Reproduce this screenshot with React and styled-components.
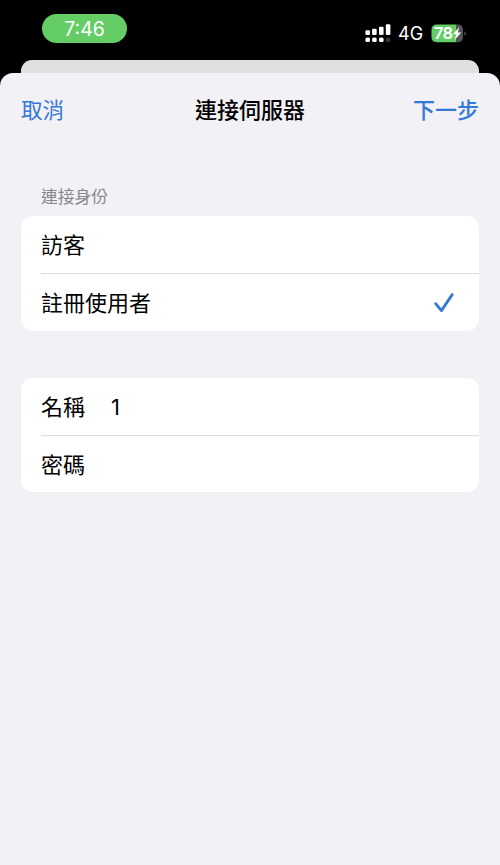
import React from "react";
import styled, { createGlobalStyle } from "styled-components";

const palette = {
  blue: "#3478d8",
  green: "#65cd66",
  sheet: "#f1f1f6",
  back: "#e0e0e0",
  line: "#dedee1",
  gray: "#88888c",
};

const App = () => {
  return (
    <>
      <GlobalStyle />
      <Screen>
        <StatusBar>
          <TimePill>7:46</TimePill>
          <StatusIcons>
            <SignalIcon />
            <Network>4G</Network>
            <BatteryIcon />
          </StatusIcons>
        </StatusBar>
        <BackSheet />
        <Sheet>
          <NavBar>
            <NavButton>取消</NavButton>
            <Title>連接伺服器</Title>
            <NavButton $strong>下一步</NavButton>
          </NavBar>
          <SectionLabel>連接身份</SectionLabel>
          <Group>
            <Row>訪客</Row>
            <Row $height="58px">
              註冊使用者
              <CheckIcon />
            </Row>
          </Group>
          <Group $gap="47px">
            <Row>
              <FieldName>名稱</FieldName>
              <FieldValue>1</FieldValue>
            </Row>
            <Row>
              <FieldName>密碼</FieldName>
            </Row>
          </Group>
        </Sheet>
      </Screen>
    </>
  );
};

export default App;

const SignalIcon = () => (
  <svg width="26" height="19" viewBox="0 0 26 19" fill="#fff">
    <rect x="0.4" y="6.3" width="4.6" height="4.6" rx="1.2" />
    <rect x="7.1" y="4.8" width="4.6" height="6.1" rx="1.2" />
    <rect x="14" y="2.8" width="4.6" height="8.1" rx="1.2" />
    <rect x="20.8" y="0.3" width="4.6" height="10.6" rx="1.2" />
    <rect x="0.4" y="13.5" width="4.6" height="4.6" rx="1.5" />
    <rect x="7.1" y="13.5" width="4.6" height="4.6" rx="1.5" />
    <rect x="14" y="13.5" width="4.6" height="4.6" rx="1.5" />
    <rect x="20.8" y="13.5" width="4.6" height="4.6" rx="1.5" fill="#333" />
  </svg>
);

const BatteryIcon = () => (
  <Battery>
    <svg width="36" height="19" viewBox="0 0 36 19">
      <path d="M6 0.5H25.5V18.2H6Q0.5 18.2 0.5 13V6Q0.5 0.5 6 0.5Z" fill={palette.green} />
      <path d="M25.5 0.5H27Q32 0.5 32 6V13Q32 18.2 27 18.2H25.5Z" fill="#56515a" />
      <path d="M33.4 7.2Q35 8 35 9.5T33.4 11.8Z" fill="#56515a" />
      <path d="M28.2 3.2L21.8 10.2H25.1L23.9 15.8L30.2 8.6H26.9Z" fill="#fff" />
    </svg>
    <Percent>78</Percent>
  </Battery>
);

const CheckIcon = () => (
  <svg width="20" height="20" viewBox="0 0 20 20">
    <path
      d="M1.7 10.7L7.4 17.6L18.2 1.6"
      fill="none"
      stroke={palette.blue}
      strokeWidth="2.8"
      strokeLinecap="round"
      strokeLinejoin="round"
    />
  </svg>
);

const GlobalStyle = createGlobalStyle`
  * {
    box-sizing: border-box;
  }

  body {
    margin: 0;
    background: #000;
    font-family: Inter, "Noto Sans CJK TC", sans-serif;
  }
`;

const Screen = styled.div`
  display: flex;
  flex-direction: column;
  height: 865px;
  overflow: hidden;
  background: #000;
`;

const StatusBar = styled.header`
  display: flex;
  justify-content: space-between;
  align-items: flex-start;
  height: 60px;
  padding: 14px 33px 0 42px;
  color: #fff;
`;

const TimePill = styled.div`
  width: 85px;
  height: 29px;
  border-radius: 15px;
  background: ${palette.green};
  font-size: 19.5px;
  line-height: 30px;
  text-align: center;
`;

const StatusIcons = styled.div`
  display: flex;
  align-items: center;
  gap: 7px;
  padding-top: 10px;
  height: 29px;
`;

const Network = styled.span`
  width: 26px;
  font-size: 18px;
  line-height: 20px;
`;

const Battery = styled.div`
  position: relative;
  width: 36px;
  height: 19px;
`;

const Percent = styled.span`
  position: absolute;
  left: 3px;
  top: 0;
  font-size: 16.5px;
  font-weight: 600;
  line-height: 19px;
  letter-spacing: -0.8px;
`;

const BackSheet = styled.div`
  flex: none;
  height: 25px;
  margin: 0 21px -12px;
  border-radius: 11px 11px 0 0;
  background: ${palette.back};
`;

const Sheet = styled.main`
  flex: 1;
  padding: 0 21px;
  border-radius: 13px 13px 0 0;
  background: ${palette.sheet};
`;

const NavBar = styled.nav`
  display: grid;
  grid-template-columns: 1fr auto 1fr;
  align-items: center;
  height: 73px;
`;

const NavButton = styled.button`
  justify-self: ${({ $strong }) => ($strong ? "end" : "start")};
  padding: 0;
  border: 0;
  background: none;
  color: ${palette.blue};
  font-family: inherit;
  font-size: ${({ $strong }) => ($strong ? "22px" : "21.5px")};
  font-weight: ${({ $strong }) => ($strong ? 500 : 400)};
  line-height: 30px;
`;

const Title = styled.h1`
  margin: 0;
  font-size: 22px;
  font-weight: 500;
  line-height: 30px;
`;

const SectionLabel = styled.h2`
  margin: 39px 0 7px 20px;
  color: ${palette.gray};
  font-size: 16.8px;
  font-weight: 400;
  line-height: 24px;
`;

const Group = styled.section`
  margin-top: ${({ $gap }) => $gap || 0};
  border-radius: 12px;
  background: #fff;
`;

const Row = styled.div`
  display: flex;
  align-items: center;
  height: ${({ $height }) => $height || "57px"};
  margin-left: 20px;
  padding: 2px 25px 0 0;
  font-size: 22px;
  line-height: 31px;

  & + & {
    border-top: 1px solid ${palette.line};
  }

  svg {
    margin: 0 0 2px auto;
  }
`;

const FieldName = styled.span`
  width: 70px;
`;

const FieldValue = styled.span`
  font-size: 22px;
`;
